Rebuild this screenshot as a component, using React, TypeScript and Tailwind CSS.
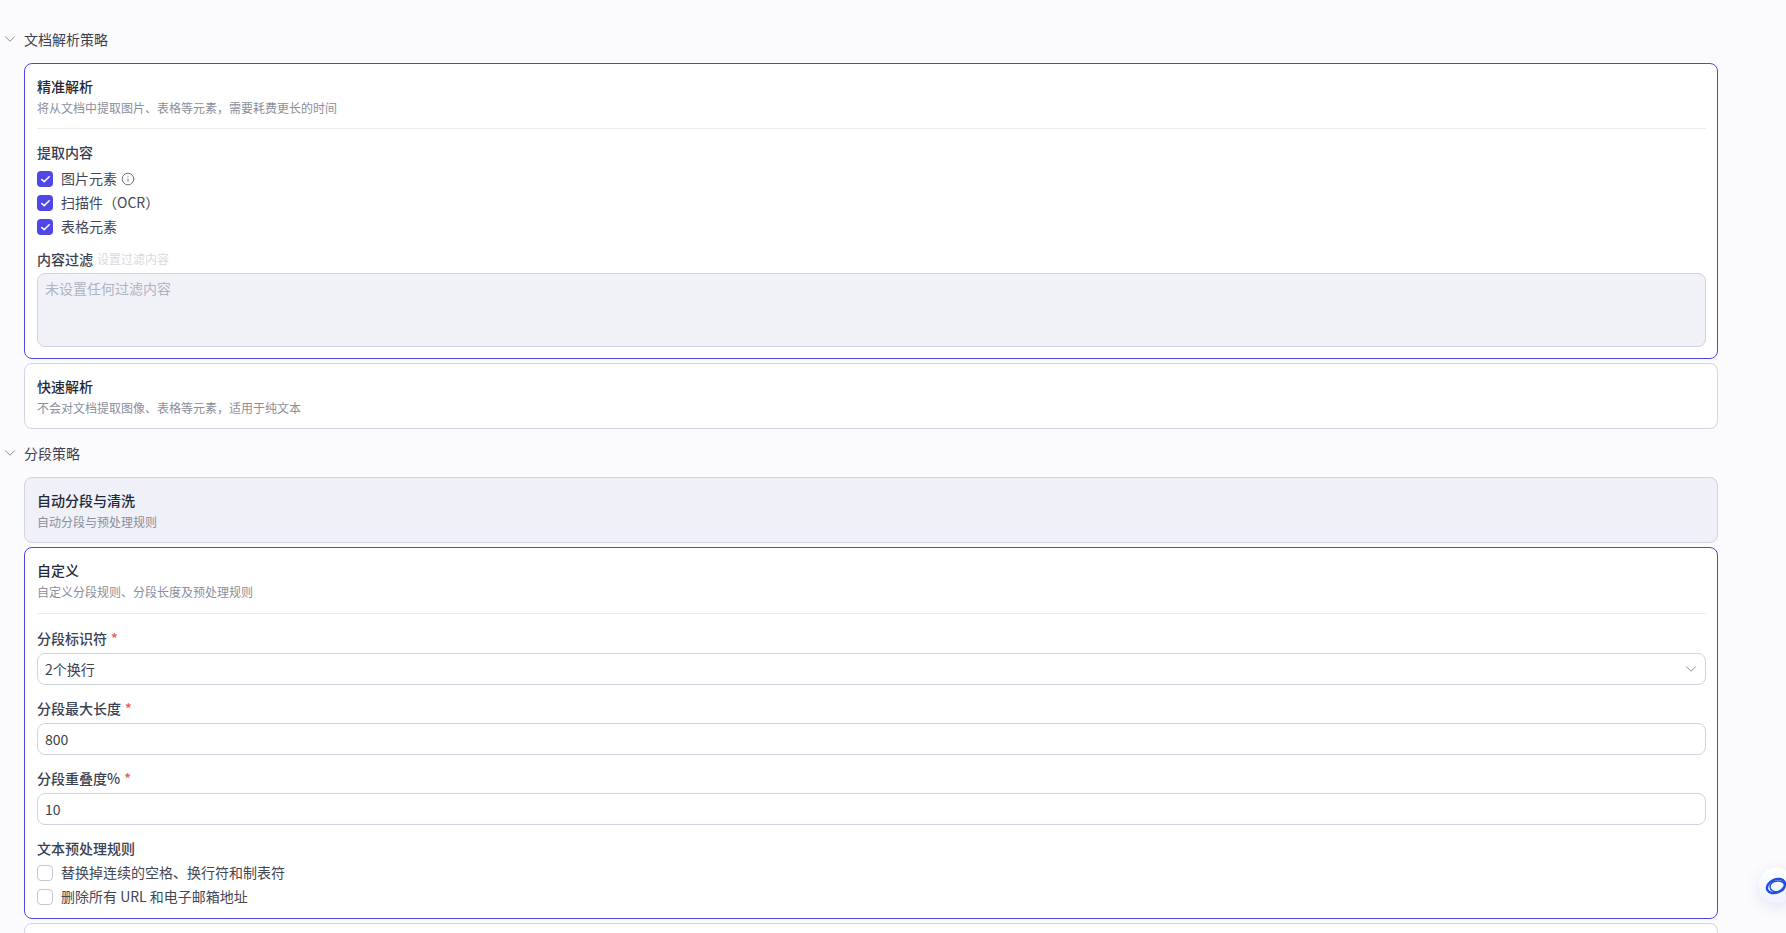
import { ChevronDown, Check, Info } from "lucide-react";
import type { ReactNode } from "react";

const Title = ({ title, desc }: { title: string; desc: string }) => (
  <div>
    <div className="text-sm leading-5 font-medium text-[#1f2937]">{title}</div>
    <div className="mt-1 text-xs leading-4 text-[#8b8e9b]">{desc}</div>
  </div>
);

const Box = ({ checked }: { checked?: boolean }) =>
  checked ? (
    <span className="flex h-4 w-4 items-center justify-center rounded bg-[#4f46e5] text-white">
      <Check size={11} strokeWidth={3.5} />
    </span>
  ) : (
    <span className="h-4 w-4 rounded border border-[#c6c7d6] bg-white" />
  );

const CheckRow = ({ checked, text, extra }: { checked?: boolean; text: string; extra?: ReactNode }) => (
  <div className="flex h-4 items-center gap-2 text-sm leading-5 text-[#434753]">
    <Box checked={checked} />
    <span className="pb-[2px]">{text}</span>
    {extra}
  </div>
);

const Label = ({ text, required }: { text: string; required?: boolean }) => (
  <div className="flex h-5 items-center pb-[2px] text-sm leading-5 font-medium text-[#374151]">
    {text}
    {required && <span className="ml-1 text-[#f05a3c]">*</span>}
  </div>
);

const Section = ({ title }: { title: string }) => (
  <div className="relative flex h-5 items-center text-sm leading-5 text-[#3d4250]">
    <ChevronDown size={18} strokeWidth={1.2} className="absolute left-[-23px] text-[#7f8290]" />
    {title}
  </div>
);

const NumberInput = ({ value }: { value: string }) => (
  <input
    readOnly
    value={value}
    className="mt-1 block h-8 w-full rounded-lg border border-[#d2d3e0] bg-white px-[7px] text-sm text-[#3d4250] outline-none"
  />
);

export default function App() {
  return (
    <div className="h-[933px] overflow-hidden bg-[#fbfbfe] font-['Noto_Sans_CJK_SC','Noto_Sans',sans-serif]">
      <div className="ml-6 w-[1694px] pt-[29px]">
        <Section title="文档解析策略" />

        <div className="mt-[14px] rounded-lg border border-[#4f46e5] bg-white pt-3 pr-[11px] pb-[11px] pl-3">
          <Title title="精准解析" desc="将从文档中提取图片、表格等元素，需要耗费更长的时间" />
          <div className="mt-3 h-px bg-[#ececf0]" />
          <div className="mt-[14px]">
            <Label text="提取内容" />
          </div>
          <div className="mt-2 flex flex-col gap-2">
            <CheckRow
              checked
              text="图片元素"
              extra={<Info size={14} strokeWidth={1.5} className="ml-[-4px] text-[#5f6372]" />}
            />
            <CheckRow checked text="扫描件（OCR）" />
            <CheckRow checked text="表格元素" />
          </div>
          <div className="mt-[15px] flex items-center gap-1">
            <Label text="内容过滤" />
            <span className="pb-[2px] text-xs leading-4 text-[#d9d9dd]">设置过滤内容</span>
          </div>
          <textarea
            disabled
            placeholder="未设置任何过滤内容"
            className="mt-[3px] block h-[74px] w-full resize-none rounded-lg border border-[#d2d3e0] bg-[#f1f2f8] px-[7px] py-[2px] text-sm leading-6 outline-none placeholder:text-[#b1b3c0]"
          />
        </div>

        <div className="mt-1 rounded-lg border border-[#d2d3e0] bg-white pt-3 pr-[11px] pb-3 pl-3">
          <Title title="快速解析" desc="不会对文档提取图像、表格等元素，适用于纯文本" />
        </div>

        <div className="mt-[14px]">
          <Section title="分段策略" />
        </div>

        <div className="mt-[14px] rounded-lg border border-[#d2d3e0] bg-[#eff0f8] pt-3 pr-[11px] pb-3 pl-3">
          <Title title="自动分段与清洗" desc="自动分段与预处理规则" />
        </div>

        <div className="mt-1 rounded-lg border border-[#4f46e5] bg-white pt-3 pr-[11px] pb-[13px] pl-3">
          <Title title="自定义" desc="自定义分段规则、分段长度及预处理规则" />
          <div className="mt-[13px] h-px bg-[#ececf0]" />
          <div className="mt-[15px]">
            <Label text="分段标识符" required />
          </div>
          <div className="mt-1 flex h-8 items-center justify-between rounded-lg border border-[#d2d3e0] bg-white pr-[5px] pl-[7px] text-sm text-[#3d4250]">
            2个换行
            <ChevronDown size={18} strokeWidth={1.2} className="text-[#7f8290]" />
          </div>
          <div className="mt-[14px]">
            <Label text="分段最大长度" required />
          </div>
          <NumberInput value="800" />
          <div className="mt-[14px]">
            <Label text="分段重叠度%" required />
          </div>
          <NumberInput value="10" />
          <div className="mt-[14px]">
            <Label text="文本预处理规则" />
          </div>
          <div className="mt-[6px] flex flex-col gap-2">
            <CheckRow text="替换掉连续的空格、换行符和制表符" />
            <CheckRow text="删除所有 URL 和电子邮箱地址" />
          </div>
        </div>

        <div className="mt-1 h-10 rounded-lg border border-[#d2d3e0] bg-white" />
      </div>

      <div className="fixed top-[868px] left-[1759px] flex h-[35px] w-[35px] items-center justify-center rounded-full bg-gradient-to-b from-white to-[#eef1ff] shadow-[0_4px_16px_rgba(40,60,160,0.12)]">
        <svg width="24" height="20" viewBox="0 0 24 20" fill="none" stroke="#1d4fe0">
          <ellipse cx="11" cy="10" rx="9.5" ry="6.5" strokeWidth="2.4" transform="rotate(-25 11 10)" />
          <ellipse cx="12.5" cy="10.5" rx="7.5" ry="5.5" strokeWidth="1.4" transform="rotate(-5 12.5 10.5)" />
        </svg>
      </div>
    </div>
  );
}
